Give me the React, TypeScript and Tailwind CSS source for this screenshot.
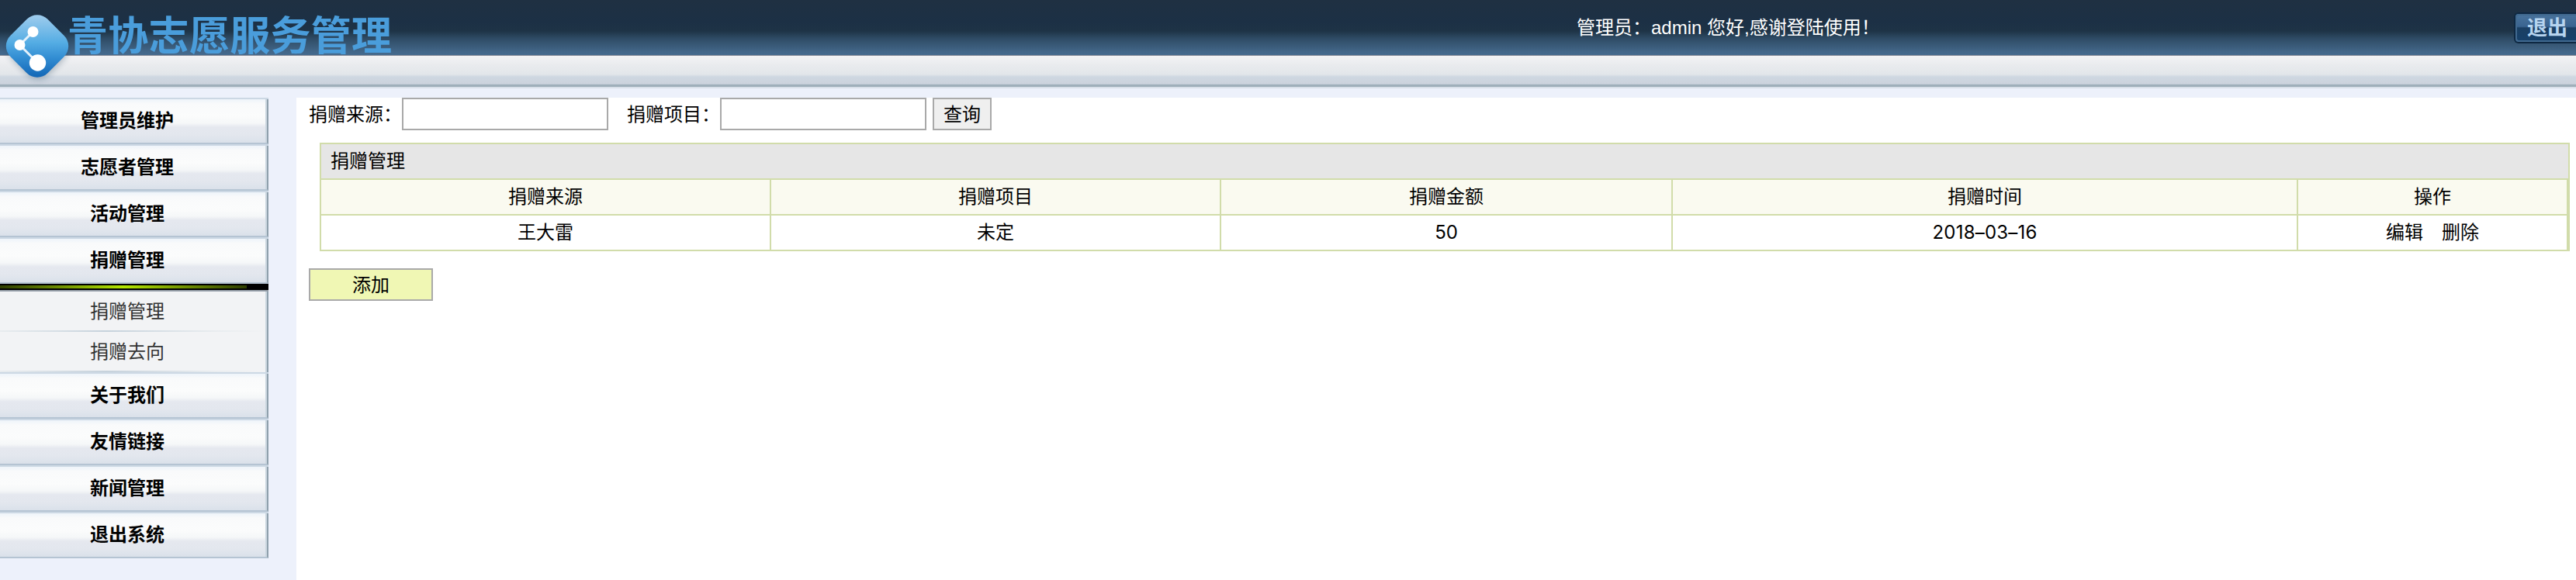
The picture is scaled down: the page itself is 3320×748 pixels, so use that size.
import React from "react";

const label = "font-['Liberation_Sans','Noto_Sans_CJK_SC',sans-serif]";

function MenuItem({ text }: { text: string }) {
  return (
    <div className="flex h-[60px] w-[346px] shrink-0 flex-col border-t-2 border-[#ccd8e4]">
      <div className="flex h-[58px] border-r-2 border-b-2 border-r-[#8fa0ac] border-b-[#b5c4d3] bg-[linear-gradient(180deg,#eef4fa_0px,#f9fafb_6px,#fbfcfc_22px,#f5f7f8_31px,#e5e8ef_36px,#e3e7ee_46px,#dae1ea_56px)]">
        <div className="flex flex-1 items-center justify-center border-r-2 border-[#cbd7e0] pr-[14px] text-2xl font-bold text-black">
          <span className="whitespace-nowrap">{text}</span>
        </div>
      </div>
    </div>
  );
}

function SubItem({ text }: { text: string }) {
  return (
    <div className="flex h-[52px] w-[346px] shrink-0 border-r-2 border-[#8fa0ac] bg-[#f2f3f5]">
      <div className="flex flex-1 flex-col border-r-2 border-[#cbd7e0]">
        <div className="flex flex-1 items-center justify-center pt-[2px] pr-[14px] text-2xl text-[#333]">
          <span className="whitespace-nowrap">{text}</span>
        </div>
        <div className="h-[2px] w-full bg-[linear-gradient(90deg,#e8ecef,#c6d2dc_40%,#e8ecef_80%,#f2f3f5)]" />
      </div>
    </div>
  );
}

function Logo() {
  return (
    <svg className="absolute left-0 top-[12px]" width="100" height="106" viewBox="0 12 100 106">
      <defs>
        <linearGradient id="gem" x1="0" y1="0" x2="1" y2="1">
          <stop offset="0.1" stopColor="#9ccbed" />
          <stop offset="0.45" stopColor="#55ade4" />
          <stop offset="0.65" stopColor="#338ed3" />
          <stop offset="0.92" stopColor="#1266b6" />
        </linearGradient>
        <filter id="soft" x="-30%" y="-30%" width="160%" height="160%">
          <feGaussianBlur stdDeviation="4" />
        </filter>
      </defs>
      <rect x="17" y="32" width="64" height="64" rx="18" transform="rotate(45 49 64)" fill="#0b2540" opacity="0.3" filter="url(#soft)" />
      <rect x="14" y="25.500" width="68" height="68" rx="19" transform="rotate(45 48 59.500)" fill="url(#gem)" />
      <path d="M42.500 41 L25.500 58 L48.500 81" fill="none" stroke="#e4f1fb" strokeWidth="3" />
      <circle cx="42.500" cy="41" r="7" fill="#fff" />
      <circle cx="25.500" cy="58" r="7" fill="#fff" />
      <circle cx="48.500" cy="81" r="10.700" fill="#fff" />
    </svg>
  );
}

const th = "flex items-center justify-center bg-[#fafaf0] whitespace-nowrap";
const td = "flex items-center justify-center bg-white whitespace-nowrap";

export default function App() {
  return (
    <div className={`flex h-[748px] w-[3320px] flex-col overflow-hidden bg-[#edf1fb] text-2xl leading-none text-black ${label}`}>
      <header className="relative h-[126px] shrink-0">
        <div className="flex h-[71px] justify-between bg-[linear-gradient(180deg,#1f3042_0px,#1c3045_28px,#1e3346_40px,#2f4c66_50px,#436789_67px,#456a8d_71px)]">
          <div className="flex flex-1 pl-[87px] pt-[17px]">
            <h1 className="font-['Noto_Sans_CJK_SC',sans-serif] text-[52px] font-bold leading-[52px] tracking-[0.3px] text-[#4a9ddb]">青协志愿服务管理</h1>
          </div>
          <div className="w-[1208px] shrink-0 whitespace-pre pt-[24px] text-white">管理员：admin 您好,感谢登陆使用！</div>
          <div className="mt-[16px] flex h-[40px] w-[80px] shrink-0 rounded-l-md border-2 border-r-0 border-[#0e2842] bg-[linear-gradient(180deg,#49739c,#3a6490_45%,#1a3f63_50%,#17416b)]">
            <div className="flex flex-1 rounded-l border-2 border-r-0 border-[#41698f] pl-[13px] pt-[3px] text-[26px] font-bold text-[#b6d4ef]">退出</div>
          </div>
        </div>
        <div className="h-px bg-[#8b8f9b]" />
        <div className="h-[37px] bg-[linear-gradient(180deg,#f3f3f5_0px,#e9ebee_12px,#e2e6ea_24px,#ced7e1_27px,#ccd3dd_36px,#b9c7d2_37px)]" />
        <div className="h-[3px] bg-[#9fafba]" />
        <div className="h-[2px] bg-[#d9e0e9]" />
        <Logo />
      </header>
      <div className="flex flex-1">
        <nav className="flex w-[382px] shrink-0 flex-col">
          <MenuItem text="管理员维护" />
          <MenuItem text="志愿者管理" />
          <MenuItem text="活动管理" />
          <MenuItem text="捐赠管理" />
          <div className="h-[8px] w-[346px] shrink-0 bg-black pt-[2px]">
            <div className="h-[4px] w-[318px] bg-[linear-gradient(90deg,#2c3c00,#b4e600_50%,#2c3c00)]" />
          </div>
          <div className="h-[2px] w-[346px] shrink-0 bg-[#9ba4ae]" />
          <SubItem text="捐赠管理" />
          <SubItem text="捐赠去向" />
          <MenuItem text="关于我们" />
          <MenuItem text="友情链接" />
          <MenuItem text="新闻管理" />
          <MenuItem text="退出系统" />
        </nav>
        <main className="flex flex-1 flex-col bg-white pl-4">
          <form className="flex h-[42px] items-center">
            <span className="w-[120px] whitespace-nowrap pt-px">捐赠来源：</span>
            <input className="h-[42px] w-[266px] border-2 border-[#a9a9a9] bg-white" />
            <span className="ml-6 w-[120px] whitespace-nowrap pt-px">捐赠项目：</span>
            <input className="h-[42px] w-[266px] border-2 border-[#a9a9a9] bg-white" />
            <button type="button" className="ml-2 flex h-[42px] w-[76px] items-center justify-center border-2 border-[#a9a9a9] bg-[#efefef] pt-px">查询</button>
          </form>
          <section className="mt-4 ml-[14px] flex h-[140px] w-[2900px] flex-col gap-[2px] bg-[#d1dcaa] p-[2px]">
            <div className="flex h-[44px] items-center bg-[#e6e6e6] pl-3">捐赠管理</div>
            <div className="grid h-[90px] w-[2894px] grid-cols-[578px_578px_580px_804px_346px] grid-rows-2 gap-[2px]">
              <div className={th}>捐赠来源</div>
              <div className={th}>捐赠项目</div>
              <div className={th}>捐赠金额</div>
              <div className={th}>捐赠时间</div>
              <div className={th}>操作</div>
              <div className={td}>王大雷</div>
              <div className={td}>未定</div>
              <div className={`${td} font-[Inter,sans-serif]`}>50</div>
              <div className={`${td} font-[Inter,sans-serif] tracking-[0.2px]`}>2018–03–16</div>
              <div className={`${td} gap-6`}>
                <a>编辑</a>
                <a>删除</a>
              </div>
            </div>
          </section>
          <button type="button" className="mt-[22px] flex h-[42px] w-[160px] items-center justify-center border-2 border-[#a9a9a9] bg-[#f0f7b4] pt-px">添加</button>
        </main>
      </div>
    </div>
  );
}
